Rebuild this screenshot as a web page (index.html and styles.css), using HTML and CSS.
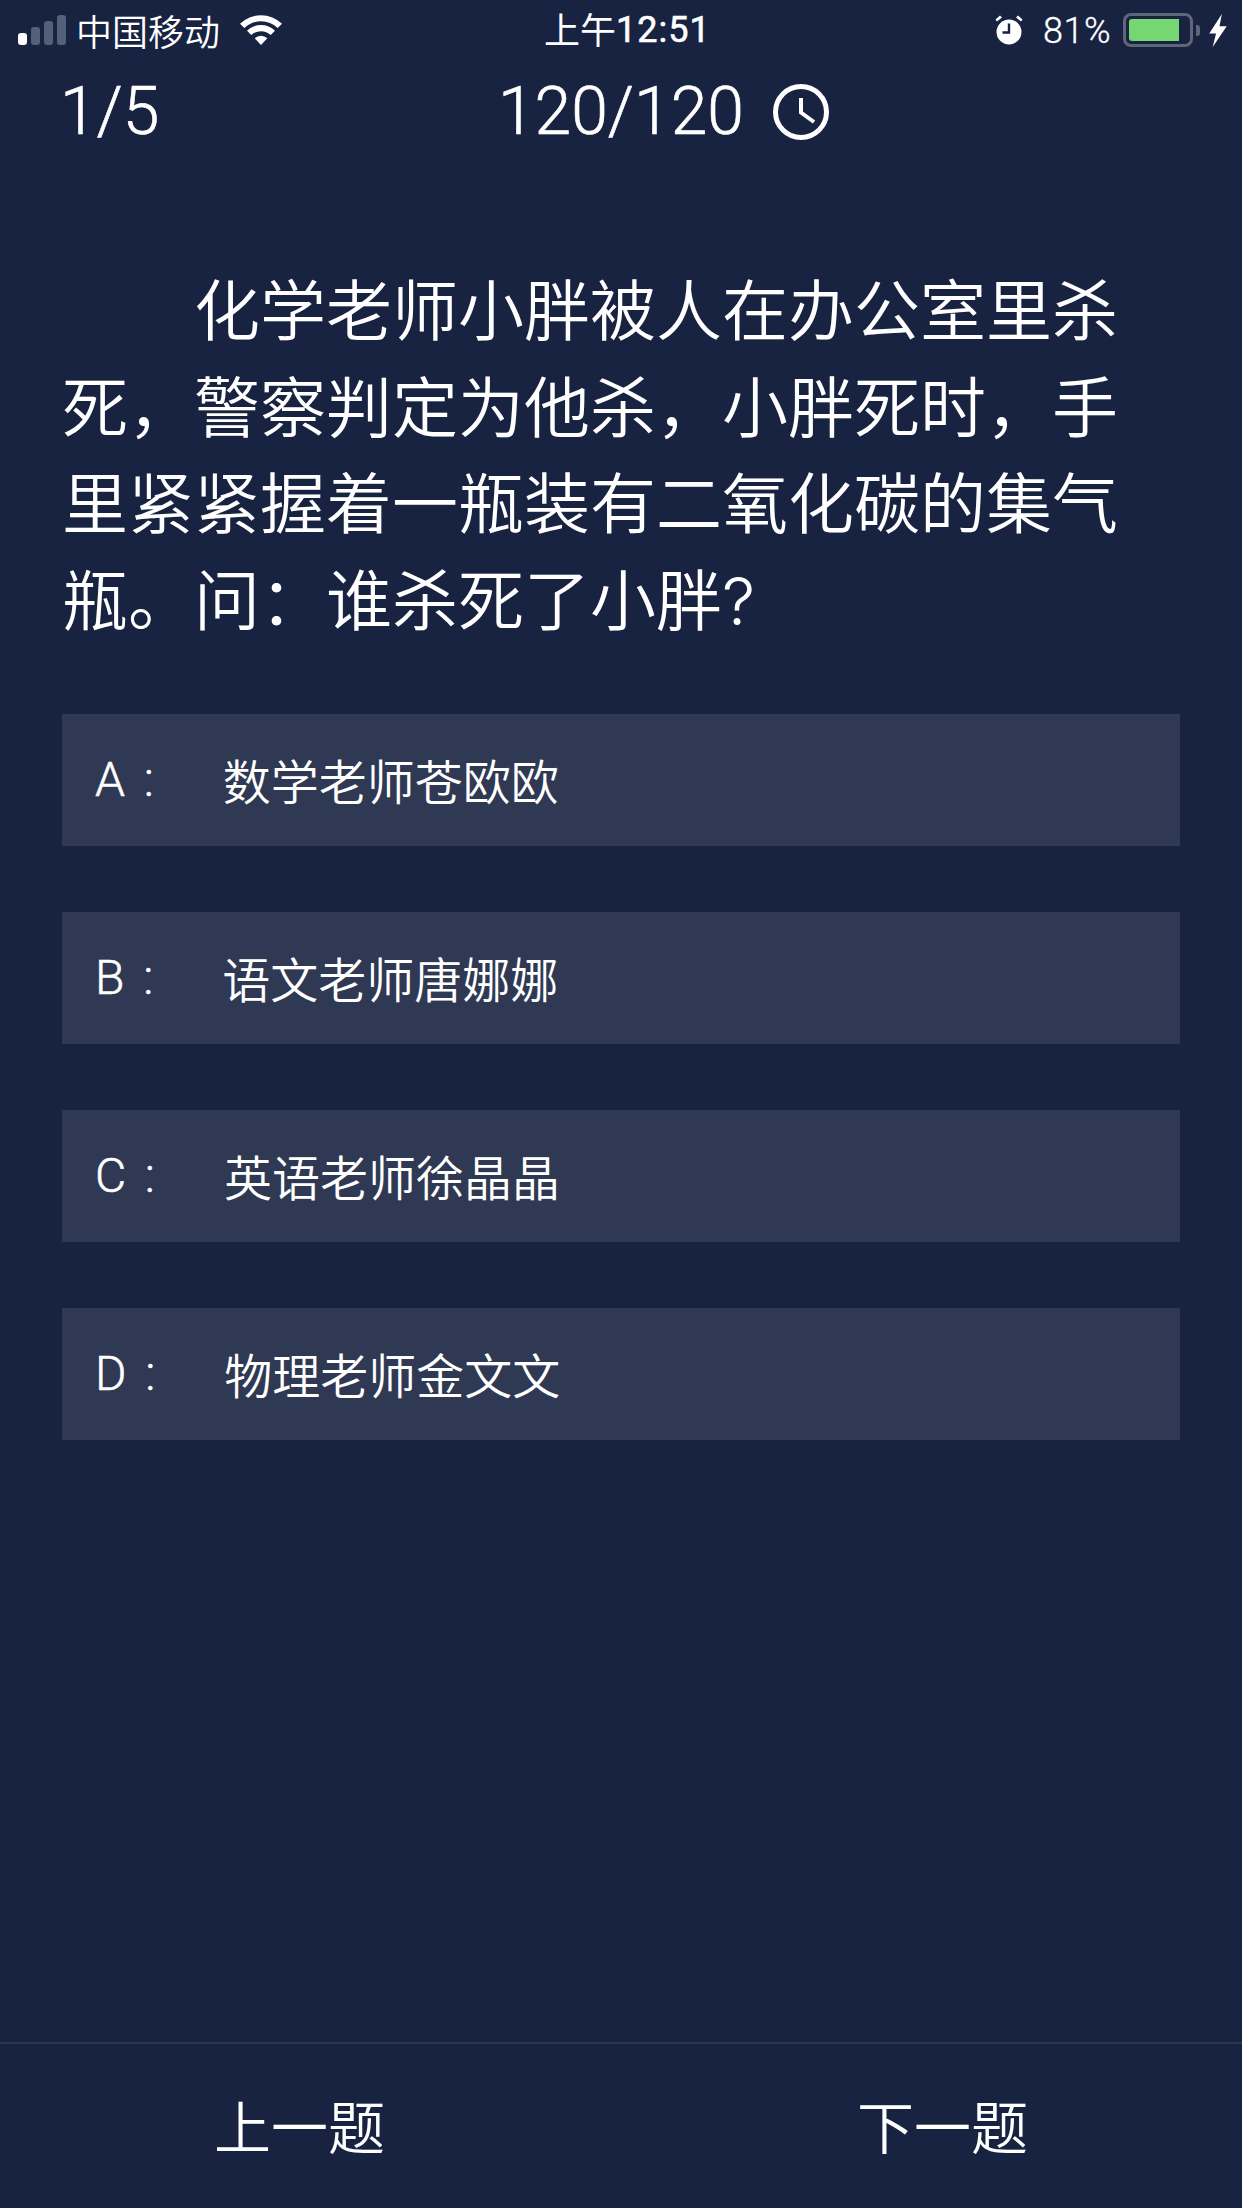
FILE: index.html
```html
<!DOCTYPE html>
<html lang="zh-CN">
<head>
<meta charset="utf-8">
<title>答题</title>
<link rel="stylesheet" href="styles.css">
</head>
<body>
<div class="page">
  <div class="status">
    <div class="status-left">
      <div class="signal"><i class="bar b1"></i><i class="bar b2"></i><i class="bar b3"></i><i class="bar b4"></i></div>
      <span class="carrier">中国移动</span>
      <svg class="wifi" viewBox="0 0 42 30"><path d="M0 8.8A30 30 0 0 1 42 8.8L37.7 13.1A24 24 0 0 0 4.3 13.1Z" fill="#fff"/><path d="M7 15.8A20 20 0 0 1 35 15.8L30.7 20.1A14 14 0 0 0 11.3 20.1Z" fill="#fff"/><path d="M14.7 23.2A9 9 0 0 1 27.3 23.2L21 30Z" fill="#fff"/></svg>
    </div>
    <div class="clock-time"><span class="cjk">上午</span><span class="digits">12:51</span></div>
    <div class="status-right">
      <svg class="alarm" viewBox="0 0 28 30"><path d="M0.5 4.5L5 0.5L7 2.5L2 6.5Z" fill="#fff"/><path d="M27.5 4.5L23 0.5L21 2.5L26 6.5Z" fill="#fff"/><circle cx="14" cy="17" r="12.5" fill="#fff"/><path d="M14 8.5V17.5H7.5" fill="none" stroke="#182341" stroke-width="2.4"/></svg>
      <span class="percent">81%</span>
      <div class="battery"><div class="battery-body"><div class="battery-fill"></div></div><div class="battery-nub"></div></div>
      <svg class="bolt" viewBox="0 0 18 34"><path d="M13 0L0 20H7L3.5 34L18 12.5H10.5Z" fill="#fff"/></svg>
    </div>
  </div>

  <header class="header">
    <div class="count">1/5</div>
    <div class="timer">
      <span>120/120</span>
      <svg class="timer-icon" viewBox="0 0 56 56"><circle cx="28" cy="28" r="25.5" fill="none" stroke="#fff" stroke-width="5"/><path d="M28 14V28.5L41 38" fill="none" stroke="#fff" stroke-width="4"/></svg>
    </div>
  </header>

  <main class="quiz">
    <p class="question">化学老师小胖被人在办公室里杀死，警察判定为他杀，小胖死时，手里紧紧握着一瓶装有二氧化碳的集气瓶。问：谁杀死了小胖?</p>
    <div class="options">
      <div class="option"><span class="label">A :</span><span>数学老师苍欧欧</span></div>
      <div class="option"><span class="label">B :</span><span>语文老师唐娜娜</span></div>
      <div class="option"><span class="label">C :</span><span>英语老师徐晶晶</span></div>
      <div class="option"><span class="label">D :</span><span>物理老师金文文</span></div>
    </div>
  </main>

  <footer class="footer">
    <span>上一题</span>
    <span>下一题</span>
  </footer>
</div>
</body>
</html>
```
FILE: styles.css
```css
* { box-sizing: border-box; }
html, body { margin: 0; padding: 0; }
body {
  width: 1242px;
  height: 2208px;
  overflow: hidden;
  background: #182341;
  color: #fff;
  font-family: Roboto, "Noto Sans CJK SC", sans-serif;
  font-weight: 300;
}
.page {
  width: 1242px;
  height: 2208px;
  display: flex;
  flex-direction: column;
}
.status {
  height: 60px;
  display: grid;
  grid-template-columns: 544px 165px 1fr;
  align-items: start;
}
.status-left {
  display: flex;
  align-items: flex-start;
  padding: 15px 0 0 18px;
}
.signal {
  display: flex;
  align-items: flex-end;
  gap: 4px;
  height: 30px;
  width: 58px;
}
.bar {
  display: block;
  width: 9px;
  background: #555f78;
  border-radius: 3px;
}
.b1 { height: 12px; background: #fff; }
.b2 { height: 18px; }
.b3 { height: 24px; }
.b4 { height: 30px; }
.carrier {
  font-family: "Noto Sans CJK SC", sans-serif;
  font-weight: 350;
  font-size: 36px;
  line-height: 30px;
  white-space: nowrap;
}
.wifi {
  width: 42px;
  height: 30px;
  margin-left: 20px;
}
.clock-time {
  display: flex;
  align-items: center;
  height: 60px;
  white-space: nowrap;
}
.cjk {
  font-family: "Noto Sans CJK SC", sans-serif;
  font-weight: 400;
  font-size: 36px;
  line-height: 56px;
  padding-bottom: 4px;
}
.digits {
  font-size: 36px;
  font-weight: 400;
  letter-spacing: 1px;
  -webkit-text-stroke: 0.6px #fff;
}
.status-right {
  display: flex;
  align-items: flex-start;
  padding: 15px 0 0 286px;
}
.alarm { width: 28px; height: 30px; }
.percent {
  font-size: 36px;
  line-height: 32px;
  margin-left: 20px;
  width: 80px;
  letter-spacing: 0.5px;
  white-space: nowrap;
  -webkit-text-stroke: 0.3px #fff;
}
.battery {
  display: flex;
  align-items: center;
  margin-top: -2px;
}
.battery-body {
  width: 70px;
  height: 34px;
  border: 3px solid #5f6679;
  border-radius: 8px;
  padding: 3px;
}
.battery-fill {
  width: 50px;
  height: 22px;
  background: #76d672;
  border-radius: 3px 0 0 3px;
}
.battery-nub {
  width: 4px;
  height: 11px;
  margin-left: 3px;
  background: #5f6679;
  border-radius: 0 3px 3px 0;
}
.bolt {
  width: 18px;
  height: 33px;
  margin-left: 9px;
  margin-top: -1px;
}
.header {
  display: grid;
  grid-template-columns: 438px auto;
  align-items: center;
  height: 104px;
  padding-left: 60px;
  font-size: 66px;
  line-height: 1;
  -webkit-text-stroke: 0.6px #fff;
}
.timer {
  display: flex;
  align-items: center;
  gap: 29px;
}
.timer-icon { width: 56px; height: 56px; }
.quiz { flex: 1; padding: 99px 62px 0; }
.question {
  margin: 0;
  font-family: Inter, "Noto Sans CJK SC", sans-serif;
  font-weight: 350;
  font-size: 66px;
  line-height: 96.5px;
  text-indent: 2em;
  width: 1118px;
}
.options {
  display: flex;
  flex-direction: column;
  gap: 66px;
  margin-top: 65px;
}
.option {
  height: 132px;
  display: flex;
  align-items: center;
  padding: 0 0 2px 33px;
  background: #2f3953;
  font-size: 48px;
  font-weight: 350;
  font-family: "Noto Sans CJK SC", sans-serif;
}
.label {
  margin-right: 69px;
  font-family: Roboto, sans-serif;
  font-weight: 300;
  word-spacing: 7px;
  -webkit-text-stroke: 0.5px #fff;
}
.footer {
  height: 166px;
  border-top: 2px solid #2a3550;
  display: flex;
  justify-content: space-between;
  align-items: center;
  padding: 0 214px 5px;
  font-family: "Noto Sans CJK SC", sans-serif;
  font-weight: 350;
  font-size: 57px;
}
```
